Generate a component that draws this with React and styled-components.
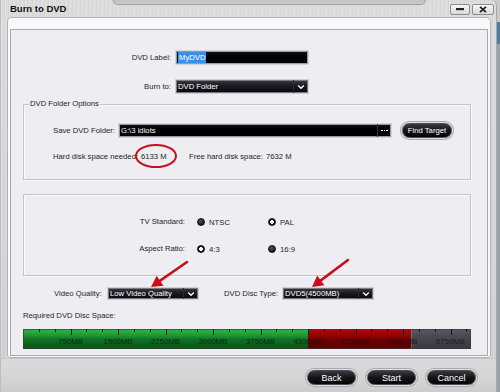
import React from 'react';
import styled, { createGlobalStyle } from 'styled-components';

const FS = 7.7;

const Global = createGlobalStyle`
  html, body { margin: 0; padding: 0; }
  body {
    width: 500px; height: 392px; overflow: hidden;
    background: linear-gradient(#c9c9c9 0 22px, #4f7aa3 22px 44px, #9aa4ae 44px);
    font-family: "Liberation Sans", Arial, sans-serif;
  }
`;

const Window = styled.div`
  position: relative;
  width: 497px;
  height: 392px;
  display: flex;
  flex-direction: column;
  box-sizing: border-box;
  border-top-right-radius: 6px;
  border-left: 1px solid #bdbdbd;
  border-right: 1px solid #a9a9a9;
  background:
    repeating-linear-gradient(90deg, rgba(255,255,255,0.18) 0 1px, rgba(0,0,0,0) 1px 3px, rgba(0,0,0,0.03) 3px 4px),
    linear-gradient(#dcdcdc, #d6d6d6 60%, #d0d0d0);
`;

const TitleBar = styled.div`
  height: 17px;
  display: flex;
  align-items: flex-start;
`;

const TitleTab = styled.div`
  width: 112px;
  height: 17px;
  padding-left: 9px;
  box-sizing: border-box;
  font-weight: bold;
  font-size: 9.5px;
  line-height: 18px;
  color: #111;
`;

const Groove = styled.div`
  flex: 1;
  height: 4px;
  background: linear-gradient(#c2c2c2, #cbcbcb);
  border-bottom: 1px solid #9d9d9d;
  border-left: 1px solid #9d9d9d;
  border-right: 1px solid #9d9d9d;
  border-bottom-left-radius: 5px;
  border-bottom-right-radius: 5px;
`;

const WinControls = styled.div`
  width: 70px;
  display: flex;
  justify-content: flex-end;
  gap: 2px;
  padding: 4px 2px 0 0;
  box-sizing: border-box;
`;

const WinBtn = styled.div`
  width: ${p => p.$w}px;
  height: 11px;
  box-sizing: border-box;
  border: 1px solid #8c8c8c;
  border-radius: 2px;
  background: linear-gradient(#f6f6f6, #d9d9d9);
  display: flex;
  align-items: center;
  justify-content: center;
`;

const Panel = styled.div`
  margin-left: 6px;
  width: 484px;
  height: 341px;
  box-sizing: border-box;
  background: #f9f9fb;
  border: 1px solid #b2b2b8;
  border-radius: 4px 5px 3px 3px;
  padding: 11px 2px 1px 2px;
  display: flex;
  box-shadow: 0 1px 0 #eeeeee;
`;

const Inner = styled.div`
  flex: 1;
  border: 1px solid #a8a8b0;
  background: #eeedf2;
  display: flex;
  flex-direction: column;
  color: #1e1e24;
  font-size: ${FS}px;
`;

const Row = styled.div`
  display: flex;
  align-items: center;
  height: ${p => p.$h || 14}px;
  margin-top: ${p => p.$mt || 0}px;
  padding-left: ${p => p.$pl || 0}px;
`;

const Label = styled.div`
  width: ${p => p.$w}px;
  flex: none;
  text-align: ${p => p.$align || 'left'};
  margin-right: ${p => p.$mr || 0}px;
  margin-left: ${p => p.$ml || 0}px;
  white-space: nowrap;
  font-size: ${FS}px;
  line-height: 10px;
`;

const TextField = styled.div`
  width: ${p => p.$w}px;
  height: 15px;
  box-sizing: border-box;
  border: 1px solid #d4d4d8;
  box-shadow: 0 0 0 1px #9a9aa2 inset;
  background: linear-gradient(#141416, #000 40%, #000);
  display: flex;
  align-items: center;
  padding-left: 2px;
  color: #fff;
  font-size: ${FS}px;
`;

const Selected = styled.span`
  background: #3c8fe8;
  color: #fff;
  padding: 1px 1px;
  line-height: 9px;
`;

const FieldText = styled.span`
  flex: 1;
  white-space: nowrap;
`;

const DotsBtn = styled.div`
  width: 14px;
  height: 100%;
  border-left: 1px solid #3a3a40;
  display: flex;
  align-items: center;
  justify-content: center;
  gap: 1px;
  box-sizing: border-box;
`;

const Dot = styled.span`
  width: 1.5px;
  height: 1.5px;
  background: #fff;
`;

const SelectBox = styled.div`
  width: ${p => p.$w}px;
  height: ${p => p.$h || 14}px;
  box-sizing: border-box;
  border: 1px solid #cfcfd4;
  box-shadow: 0 0 0 1px #7a7a82 inset;
  background: linear-gradient(#3b3b45, #1a1a21 45%, #060609);
  display: flex;
  align-items: center;
  padding-left: 2px;
  color: #fff;
  font-size: ${FS}px;
`;

const Chevron = styled.div`
  width: 14px;
  height: 100%;
  display: flex;
  align-items: center;
  justify-content: center;
  border-left: 1px solid #2a2a32;
`;

const Group = styled.div`
  position: relative;
  margin-top: ${p => p.$mt}px;
  margin-left: 12px;
  width: 448px;
  height: ${p => p.$h}px;
  box-sizing: border-box;
  border: 1px solid #c3c3ca;
  box-shadow: 1px 1px 0 #fafafc inset, 1px 1px 0 #fafafc;
  display: flex;
  flex-direction: column;
`;

const Legend = styled.div`
  position: absolute;
  top: -6px;
  left: 5px;
  padding: 0 1px;
  background: #eeedf2;
  font-size: ${FS}px;
  line-height: 10px;
`;

const PillButton = styled.div`
  width: ${p => p.$w}px;
  height: 15px;
  box-sizing: border-box;
  border-radius: 8px;
  border: 1px solid #4a4a52;
  background: linear-gradient(#3a3a42, #141418 50%, #050507);
  box-shadow: 0 0 0 1px #e2e2e6, 0 0 0 2px #a8a8ae;
  color: #fff;
  font-size: ${p => p.$fs || FS}px;
  display: flex;
  align-items: center;
  justify-content: center;
  flex: none;
  margin-left: ${p => p.$ml || 0}px;
`;

const Value = styled.span`
  margin-left: 3px;
`;

const RadioOpt = styled.div`
  width: ${p => p.$w}px;
  display: flex;
  align-items: center;
  gap: 4px;
  flex: none;
`;

const Radio = styled.div`
  width: 8px;
  height: 8px;
  border-radius: 50%;
  box-sizing: border-box;
  background: ${p => p.$ring
    ? 'radial-gradient(circle, #fff 0 1.6px, #1a1a1e 2px)'
    : 'radial-gradient(circle at 40% 35%, #55555c, #16161a 70%)'};
  border: 1px solid #101014;
`;

const Footer = styled.div`
  flex: 1;
  display: flex;
  justify-content: flex-end;
  align-items: flex-start;
  gap: 11px;
  padding: 11px 20px 0 0;
  border-top: 1px solid #c4c4c4;
  background: linear-gradient(#dadada, #d3d3d3 70%, #cccccc);
`;

const Overlay = styled.svg`
  position: absolute;
  left: -1px;
  top: 0;
  pointer-events: none;
`;

const BarSvg = styled.svg`
  display: block;
  margin-top: 8px;
  margin-left: 12px;
`;

function ChevronIcon() {
  return (
    <svg width="8" height="6" viewBox="0 0 8 6">
      <path d="M1.2 1.5 L4 4.3 L6.8 1.5" fill="none" stroke="#fff" strokeWidth="1.3" />
    </svg>
  );
}

function Select({ w, h, children }) {
  return (
    <SelectBox $w={w} $h={h}>
      <FieldText>{children}</FieldText>
      <Chevron><ChevronIcon /></Chevron>
    </SelectBox>
  );
}

function arrowHead(x1, y1, tx, ty, len, half) {
  const dx = tx - x1, dy = ty - y1;
  const l = Math.hypot(dx, dy);
  const ux = dx / l, uy = dy / l;
  const bx = tx - ux * len, by = ty - uy * len;
  const px = -uy, py = ux;
  return {
    line: [x1, y1, bx + ux * 2, by + uy * 2],
    pts: `${tx},${ty} ${bx + px * half},${by + py * half} ${bx - px * half},${by - py * half}`,
  };
}

function Arrow({ x1, y1, tx, ty }) {
  const a = arrowHead(x1, y1, tx, ty, 11, 6);
  return (
    <g>
      <line x1={a.line[0]} y1={a.line[1]} x2={a.line[2]} y2={a.line[3]} stroke="#c8101c" strokeWidth="2.6" strokeLinecap="round" />
      <polygon points={a.pts} fill="#c8101c" />
    </g>
  );
}

function SpaceBar() {
  const W = 448, H = 20;
  const per = 47.5 / 750;
  const cap = 4500, need = 6133;
  const gx = cap * per, rx = need * per;
  const ticks = [];
  for (let mb = 250; mb * per < W; mb += 250) {
    const x = Math.round(mb * per) + 0.5;
    const major = mb % 750 === 0;
    ticks.push(<line key={mb} x1={x} y1={0} x2={x} y2={major ? 6 : 3} stroke="#161616" strokeWidth="1" />);
  }
  const labels = [];
  for (let mb = 750; mb * per < W; mb += 750) {
    labels.push(
      <text key={mb} x={mb * per} y={15} textAnchor="middle" fontSize="7.8" fontFamily="Liberation Sans, Arial, sans-serif" fill="#141414" fillOpacity="0.85">{mb}MB</text>
    );
  }
  return (
    <BarSvg width={W} height={H} viewBox={`0 0 ${W} ${H}`}>
      <defs>
        <linearGradient id="g" x1="0" y1="0" x2="0" y2="1">
          <stop offset="0" stopColor="#35b547" />
          <stop offset="0.3" stopColor="#1f9a33" />
          <stop offset="0.55" stopColor="#0f6e21" />
          <stop offset="1" stopColor="#0a5417" />
        </linearGradient>
        <linearGradient id="r" x1="0" y1="0" x2="0" y2="1">
          <stop offset="0" stopColor="#b20a0a" />
          <stop offset="0.3" stopColor="#9a0000" />
          <stop offset="0.55" stopColor="#700000" />
          <stop offset="1" stopColor="#560000" />
        </linearGradient>
        <linearGradient id="k" x1="0" y1="0" x2="0" y2="1">
          <stop offset="0" stopColor="#5a5a66" />
          <stop offset="0.4" stopColor="#484852" />
          <stop offset="1" stopColor="#383842" />
        </linearGradient>
      </defs>
      <rect x="0" y="0" width={gx} height={H} fill="url(#g)" />
      <rect x={gx} y="0" width={rx - gx} height={H} fill="url(#r)" />
      <rect x={rx} y="0" width={W - rx} height={H} fill="url(#k)" />
      <rect x="0.5" y="0.5" width={W - 1} height={H - 1} fill="none" stroke="#3a3a3a" strokeOpacity="0.7" />
      {ticks}
      {labels}
    </BarSvg>
  );
}

export default function App() {
  return (
    <>
      <Global />
      <Window>
        <TitleBar>
          <TitleTab>Burn to DVD</TitleTab>
          <Groove />
          <WinControls>
            <WinBtn $w={20}>
              <svg width="8" height="3"><rect x="0" y="0" width="8" height="2.2" fill="#222" /></svg>
            </WinBtn>
            <WinBtn $w={22}>
              <svg width="8" height="7" viewBox="0 0 8 7"><path d="M1 0.8 L7 6.2 M7 0.8 L1 6.2" stroke="#222" strokeWidth="1.8" /></svg>
            </WinBtn>
          </WinControls>
        </TitleBar>

        <Panel>
          <Inner>
            <Row $mt={20} $h={15}>
              <Label $w={160} $align="right" $mr={4}>DVD Label:</Label>
              <TextField $w={134}><Selected>MyDVD</Selected></TextField>
            </Row>
            <Row $mt={14} $h={15}>
              <Label $w={160} $align="right" $mr={4}>Burn to:</Label>
              <Select w={134} h={15}>DVD Folder</Select>
            </Row>

            <Group $mt={10} $h={76}>
              <Legend>DVD Folder Options</Legend>
              <Row $mt={18} $h={15} $pl={29}>
                <Label $w={65}>Save DVD Folder:</Label>
                <TextField $w={274}>
                  <FieldText>G:\3 idiots</FieldText>
                  <DotsBtn><Dot /><Dot /><Dot /></DotsBtn>
                </TextField>
                <PillButton $w={50} $ml={10}>Find Target</PillButton>
              </Row>
              <Row $mt={14} $h={10} $pl={29}>
                <Label $w={136}>Hard disk space needed:<Value>6133 M</Value></Label>
                <Label $w={120}>Free hard disk space:<Value>7632 M</Value></Label>
              </Row>
            </Group>

            <Group $mt={14} $h={82}>
              <Row $mt={22} $h={10}>
                <Label $w={161} $align="right" $mr={12}>TV Standard:</Label>
                <RadioOpt $w={71}><Radio /><span>NTSC</span></RadioOpt>
                <RadioOpt $w={60}><Radio $ring /><span>PAL</span></RadioOpt>
              </Row>
              <Row $mt={17} $h={10}>
                <Label $w={161} $align="right" $mr={12}>Aspect Ratio:</Label>
                <RadioOpt $w={71}><Radio $ring /><span>4:3</span></RadioOpt>
                <RadioOpt $w={60}><Radio /><span>16:9</span></RadioOpt>
              </Row>
            </Group>

            <Row $mt={11} $h={13} $pl={43}>
              <Label $w={53}>Video Quality:</Label>
              <Select w={92} h={13}>Low Video Quality</Select>
              <Label $w={58} $ml={25}>DVD Disc Type:</Label>
              <Select w={92} h={13}>DVD5(4500MB)</Select>
            </Row>

            <Row $mt={11} $h={10} $pl={12}>
              <Label $w={200}>Required DVD Disc Space:</Label>
            </Row>

            <SpaceBar />
          </Inner>
        </Panel>

        <Footer>
          <PillButton $w={49} $fs={9}>Back</PillButton>
          <PillButton $w={49} $fs={9}>Start</PillButton>
          <PillButton $w={49} $fs={9}>Cancel</PillButton>
        </Footer>

        <Overlay width="500" height="392" viewBox="0 0 500 392">
          <ellipse cx="156" cy="156" rx="20" ry="11" fill="none" stroke="#c8101c" strokeWidth="2" />
          <Arrow x1={187} y1={262} tx={151} ty={287} />
          <Arrow x1={348} y1={260} tx={312} ty={287} />
        </Overlay>
      </Window>
    </>
  );
}
